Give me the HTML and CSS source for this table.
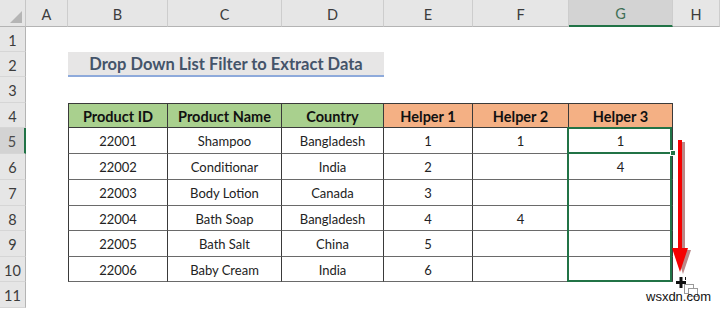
FILE: index.html
```html
<!DOCTYPE html>
<html>
<head>
<meta charset="utf-8">
<link rel="stylesheet" href="styles.css">
</head>
<body>
<div class="sheet">
  <div class="corner"><span class="tri"></span></div>
  <div class="ch">A</div><div class="ch">B</div><div class="ch">C</div><div class="ch">D</div><div class="ch">E</div><div class="ch">F</div><div class="ch ch-sel">G</div><div class="ch">H</div>

  <div class="rh">1</div><div class="blank span8"></div>

  <div class="rh">2</div><div class="blank"></div><div class="title">Drop Down List Filter to Extract Data</div><div class="blank span4"></div>

  <div class="rh">3</div><div class="blank span8"></div>

  <div class="rh">4</div><div class="blank"></div>
  <div class="tc th green first">Product ID</div><div class="tc th green">Product Name</div><div class="tc th green">Country</div><div class="tc th orange">Helper 1</div><div class="tc th orange">Helper 2</div><div class="tc th orange">Helper 3</div>
  <div class="blank"></div>

  <div class="rh rh-sel">5</div><div class="blank"></div>
  <div class="tc first">22001</div><div class="tc">Shampoo</div><div class="tc">Bangladesh</div><div class="tc">1</div><div class="tc">1</div><div class="tc active">1<div class="selection"></div><div class="active-line"></div><span class="handle"></span></div>
  <div class="blank"></div>

  <div class="rh">6</div><div class="blank"></div>
  <div class="tc first">22002</div><div class="tc">Conditionar</div><div class="tc">India</div><div class="tc">2</div><div class="tc"></div><div class="tc">4</div>
  <div class="blank"></div>

  <div class="rh">7</div><div class="blank"></div>
  <div class="tc first">22003</div><div class="tc">Body Lotion</div><div class="tc">Canada</div><div class="tc">3</div><div class="tc"></div><div class="tc"></div>
  <div class="blank"></div>

  <div class="rh">8</div><div class="blank"></div>
  <div class="tc first">22004</div><div class="tc">Bath Soap</div><div class="tc">Bangladesh</div><div class="tc">4</div><div class="tc">4</div><div class="tc"></div>
  <div class="blank"></div>

  <div class="rh">9</div><div class="blank"></div>
  <div class="tc first">22005</div><div class="tc">Bath Salt</div><div class="tc">China</div><div class="tc">5</div><div class="tc"></div><div class="tc"></div>
  <div class="blank"></div>

  <div class="rh">10</div><div class="blank"></div>
  <div class="tc first">22006</div><div class="tc">Baby Cream</div><div class="tc">India</div><div class="tc">6</div><div class="tc"></div><div class="tc"></div>
  <div class="blank"></div>

  <div class="rh">11</div><div class="blank span8"></div>
</div>

<svg class="arrow" width="30" height="140" viewBox="0 0 30 140">
  <rect x="12" y="2" width="4" height="110" fill="#7a1010" opacity="0.5"/>
  <polygon points="6,110 22,110 14,134" fill="#7a1010" opacity="0.5"/>
  <rect x="9" y="0" width="4" height="110" fill="#f50000"/>
  <polygon points="3,108 19,108 11,132" fill="#f50000"/>
</svg>

<svg class="cursor" width="26" height="22" viewBox="0 0 26 22">
  <rect x="9.5" y="7.5" width="9" height="9" fill="#fff" stroke="#9a9a9a" stroke-width="1"/>
  <rect x="13.5" y="11.5" width="9" height="8" fill="#fff" stroke="#9a9a9a" stroke-width="1"/>
  <rect x="1" y="4" width="10" height="3" fill="#111"/>
  <rect x="4.5" y="0" width="3" height="11" fill="#111"/>
  <rect x="10" y="0" width="1" height="3" fill="#111"/>
</svg>

<div class="watermark">wsxdn.com</div>
</body>
</html>
```

FILE: styles.css
```css
* { box-sizing: border-box; }
html, body { margin: 0; padding: 0; background: #fff; }
body { width: 720px; height: 309px; overflow: hidden; position: relative; font-family: Lato, "Open Sans", sans-serif; }

.sheet {
  display: grid;
  grid-template-columns: 26px 42px 100px 114px 102px 89px 96px 104px 47px;
  grid-template-rows: 27px 25px 25px 26px 25px 26px 26px 26px 25px 26px 25px 26px;
}

.corner {
  background: #e6e6e6;
  border-right: 1px solid #c6c6c6;
  border-bottom: 1px solid #b4b4b4;
  position: relative;
}
.tri {
  position: absolute; right: 3px; bottom: 3px;
  width: 0; height: 0;
  border-left: 12px solid transparent;
  border-bottom: 12px solid #b5b5b5;
}
.ch {
  background: #e6e6e6;
  border-right: 1px solid #cdcdcd;
  border-bottom: 1px solid #b4b4b4;
  color: #3c3c3c;
  font-size: 14.5px;
  display: flex; align-items: center; justify-content: center;
  padding-top: 2px;
}
.ch-sel {
  background: #d3d3d3;
  color: #3f6f55;
  border-bottom: 2px solid #217346;
}
.rh {
  background: #e6e6e6;
  border-right: 1px solid #b4b4b4;
  border-bottom: 1px solid #d6d6d6;
  color: #3c3c3c;
  font-size: 14.5px;
  display: flex; align-items: center; justify-content: center;
  padding-top: 2px;
}
.rh-sel {
  background: #d3d3d3;
  color: #4b4b4b;
  border-right: 2px solid #217346;
}
.blank { background: #fff; }
.span8 { grid-column: span 8; }
.span4 { grid-column: span 4; }

.title {
  grid-column: span 3;
  background: #e7e6e6;
  border-bottom: 2px solid #8eaadb;
  color: #44546a;
  font-weight: 700;
  font-size: 16.5px;
  display: flex; align-items: center; justify-content: center;
  padding-top: 1px;
}

.tc {
  border-right: 1px solid #3a3a3a;
  border-bottom: 1px solid #6a6a6a;
  display: flex; align-items: center; justify-content: center;
  font-size: 13px;
  color: #222;
  padding-top: 1px;
}
.tc.first { border-left: 1px solid #3a3a3a; }
.th {
  border-top: 1px solid #3a3a3a;
  border-bottom: 1px solid #3a3a3a;
  font-weight: 700;
  font-size: 14.5px;
  color: #111;
}
.green { background: #a9d08e; }
.orange { background: #f4b084; }

.active { position: relative; }
.selection {
  position: absolute;
  left: -2px; top: -1px;
  width: 105px; height: 155px;
  border: 2px solid #217346;
  pointer-events: none;
}
.active-line {
  position: absolute;
  left: -2px; bottom: -1px;
  width: 105px; height: 2px;
  background: #217346;
}
.handle {
  position: absolute;
  right: -4px; bottom: -3px;
  width: 6px; height: 6px;
  background: #217346;
  border: 1px solid #fff;
}

.arrow { position: absolute; left: 669px; top: 140px; }
.cursor { position: absolute; left: 675px; top: 277px; }
.watermark {
  position: absolute; left: 646px; top: 289px;
  font-family: "Liberation Sans", Arial, sans-serif;
  font-size: 13px; color: #111;
}
```
